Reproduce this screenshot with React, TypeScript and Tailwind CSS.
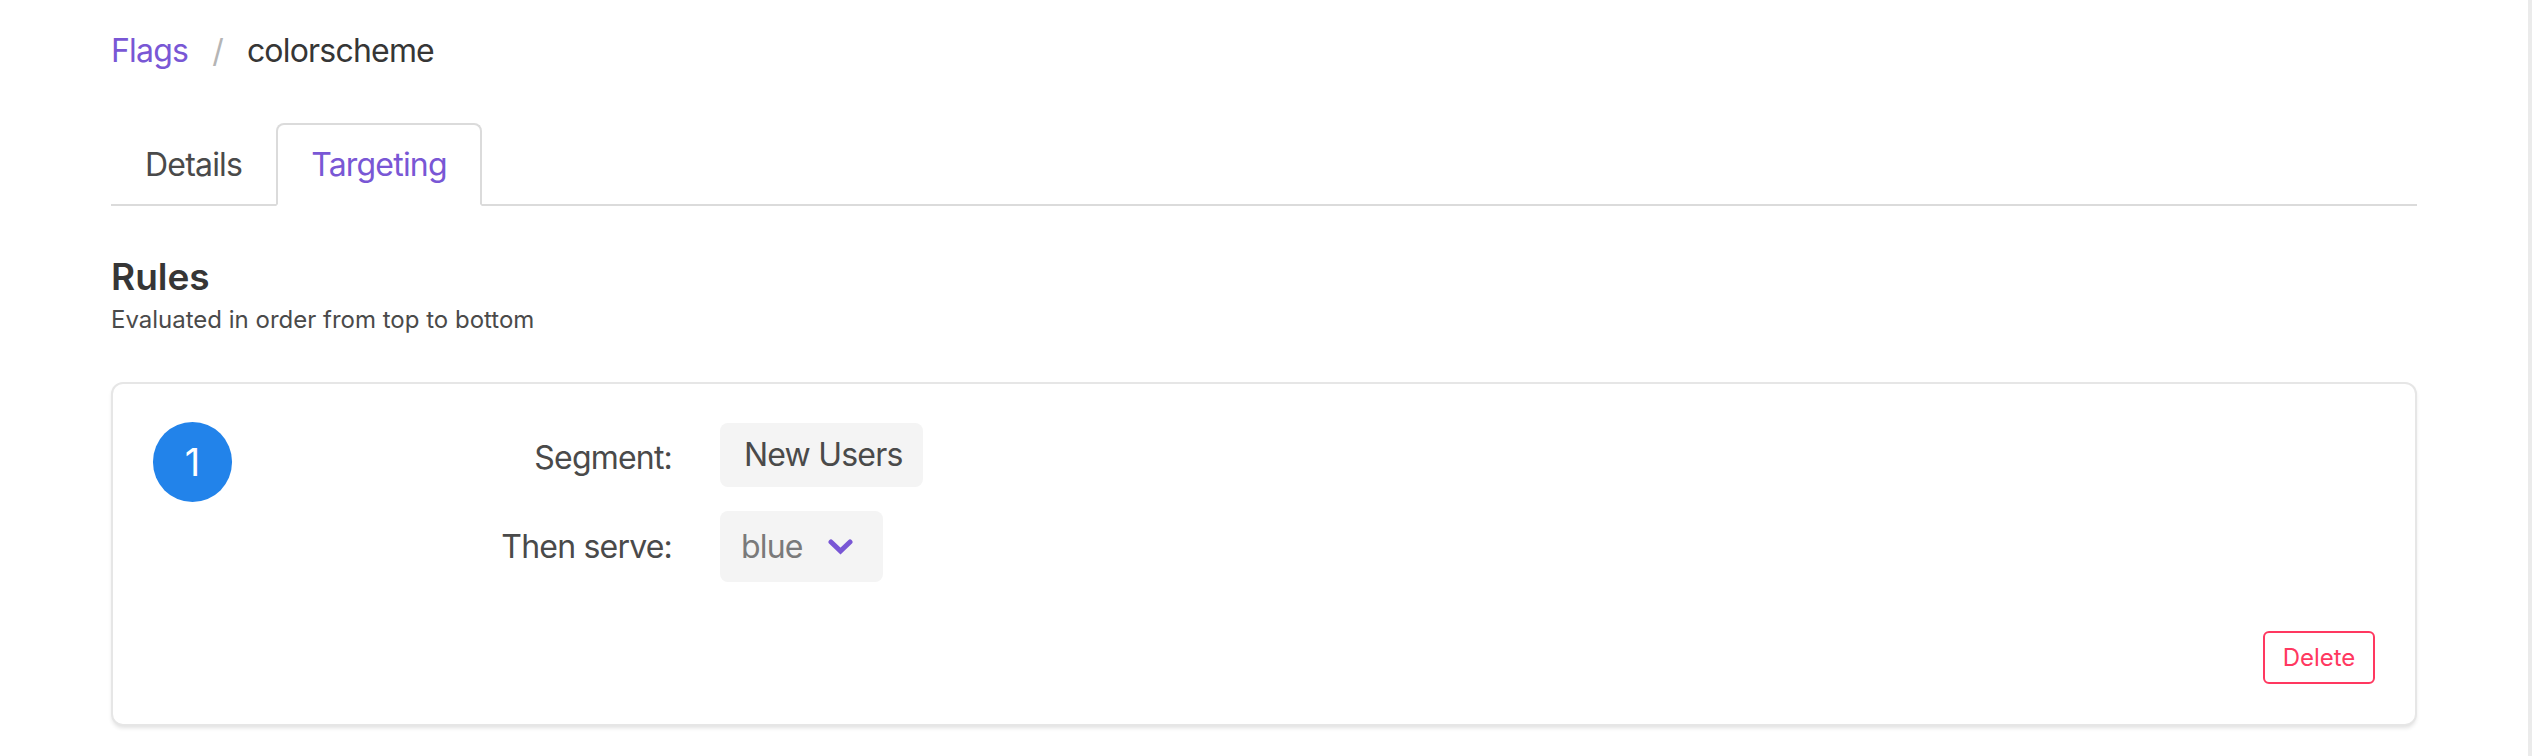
import React from "react";

function Chevron() {
  return (
    <svg width="25" height="17" viewBox="0 0 25 17" fill="none">
      <polyline
        points="3,4 12.5,13 22,4"
        stroke="#7957d5"
        strokeWidth="5"
        strokeLinecap="round"
        strokeLinejoin="miter"
      />
    </svg>
  );
}

export default function App() {
  return (
    <div className="flex h-[756px] w-full bg-white font-['Inter',sans-serif] text-[#4a4a4a]">
      <main className="flex-1 px-[111px] pt-[27px]">
        {/* Breadcrumb */}
        <nav className="flex items-center text-[32px] leading-[48px] tracking-[-0.025em]">
          <span className="pr-[24px] text-[#7957d5]">Flags</span>
          <span className="text-[#b5b5b5]">/</span>
          <span className="pl-[24px] text-[#363636]">colorscheme</span>
        </nav>

        {/* Tabs */}
        <ul className="mt-[48px] flex border-b-2 border-[#dbdbdb] text-[32px] leading-[48px] tracking-[-0.025em]">
          <li className="-mb-[2px] border-2 border-transparent px-[32px] pt-[16px] pb-[15px] text-[#4a4a4a]">
            Details
          </li>
          <li className="-mb-[2px] rounded-t-[8px] border-2 border-[#dbdbdb] border-b-white bg-white px-[33px] pt-[16px] pb-[15px] text-[#7957d5]">
            Targeting
          </li>
        </ul>

        {/* Heading */}
        <h2 className="mt-[50px] text-[37px] font-semibold leading-[42px] text-[#363636]">
          Rules
        </h2>
        <p className="mt-[4px] text-[24px] leading-[36px] text-[#4a4a4a]">
          Evaluated in order from top to bottom
        </p>

        {/* Rule card */}
        <div className="mt-[44px] rounded-[12px] border-2 border-[#e6e6e6] bg-white px-[40px] pt-[38px] pb-[40px] shadow-[0_3px_4px_-1px_rgba(10,10,10,0.12)]">
          <div className="flex">
            <div className="flex h-[80px] w-[79px] shrink-0 items-center justify-center rounded-full bg-[#2283ea] text-[38px] text-white">
              1
            </div>
            <div className="flex flex-col gap-[24px] pt-[1px] text-[32px] leading-[48px] tracking-[-0.025em]">
              <div className="flex items-center">
                <div className="w-[440px] pt-[6px] text-right text-[#4a4a4a]">
                  Segment:
                </div>
                <div className="ml-[48px] flex h-[64px] items-center rounded-[8px] bg-[#f4f4f4] pl-[24px] pr-[21px] text-[#4a4a4a]">
                  New Users
                </div>
              </div>
              <div className="flex items-center">
                <div className="w-[440px] text-right text-[#4a4a4a]">
                  Then serve:
                </div>
                <div className="ml-[48px] flex h-[71px] items-center rounded-[8px] bg-[#f4f4f4] pl-[21px] pr-[30px] text-[#7a7a7a]">
                  <span>blue</span>
                  <span className="ml-[25px] flex items-center">
                    <Chevron />
                  </span>
                </div>
              </div>
            </div>
          </div>
          <div className="mt-[49px] flex justify-end">
            <button className="flex h-[53px] w-[112px] items-center justify-center rounded-[6px] border-2 border-[#ff3860] bg-white text-[24px] text-[#ff3860]">
              Delete
            </button>
          </div>
        </div>
      </main>
      <div className="w-[4px] shrink-0 bg-[#ebebeb]" />
    </div>
  );
}
